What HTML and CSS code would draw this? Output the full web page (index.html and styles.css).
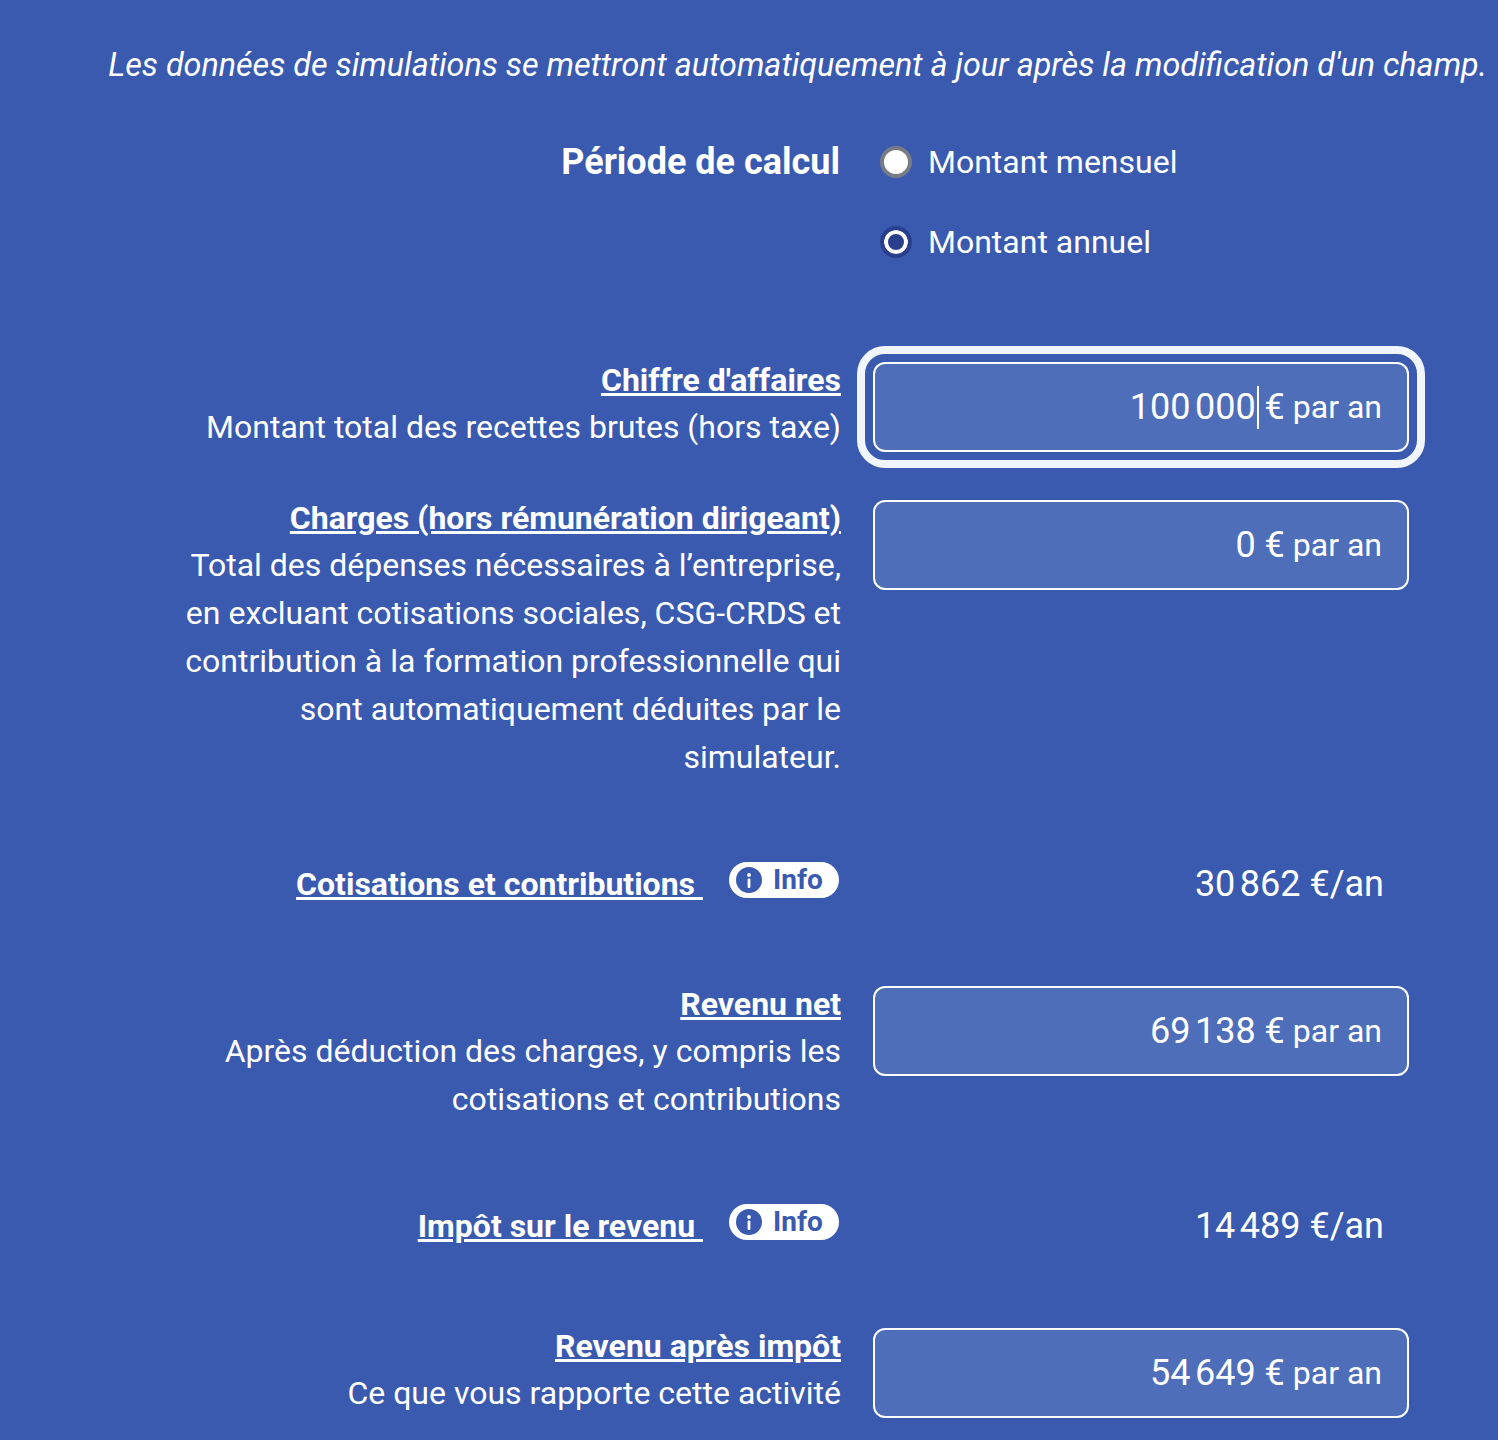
FILE: index.html
```html
<!DOCTYPE html>
<html lang="fr">
<head>
  <meta charset="UTF-8">
  <meta name="viewport" content="width=device-width, initial-scale=1.0">
  <title>Simulateur de revenus</title>
  <link rel="stylesheet" href="styles.css">
</head>
<body>
  <p class="intro">Les données de simulations se mettront automatiquement à jour après la modification d'un champ.</p>

  <div class="row period">
    <div class="period-title">Période de calcul</div>
    <div class="radios">
      <div class="radio-option"><span class="radio"></span>Montant mensuel</div>
      <div class="radio-option"><span class="radio checked"></span>Montant annuel</div>
    </div>
  </div>

  <div class="row">
    <div class="label">
      <a class="label-title" href="#">Chiffre d'affaires</a>
      <div>Montant total des recettes brutes (hors taxe)</div>
    </div>
    <div class="field focused"><span class="amount">100&#8239;000</span><span class="caret"></span><span class="amount">&nbsp;€</span><span>&nbsp;par an</span></div>
  </div>

  <div class="row">
    <div class="label">
      <a class="label-title" href="#">Charges (hors rémunération dirigeant)</a>
      <div>Total des dépenses nécessaires à l’entreprise, en excluant cotisations sociales, CSG-CRDS et contribution à la formation professionnelle qui sont automatiquement déduites par le simulateur.</div>
    </div>
    <div class="field"><span class="amount">0 €</span><span>&nbsp;par an</span></div>
  </div>

  <div class="row result">
    <div class="result-label">
      <a class="label-title" href="#">Cotisations et contributions&nbsp;</a>
      <span class="info"><svg viewBox="0 0 26 26" width="26" height="26"><circle cx="13" cy="13" r="13" fill="#3a5ab0"/><circle cx="13" cy="8" r="1.9" fill="#fff"/><rect x="11.6" y="11.4" width="2.8" height="9.6" rx="1" fill="#fff"/></svg>Info</span>
    </div>
    <div class="result-value">30&#8239;862 €/an</div>
  </div>

  <div class="row">
    <div class="label">
      <a class="label-title" href="#">Revenu net</a>
      <div>Après déduction des charges, y compris les cotisations et contributions</div>
    </div>
    <div class="field"><span class="amount">69&#8239;138 €</span><span>&nbsp;par an</span></div>
  </div>

  <div class="row result">
    <div class="result-label">
      <a class="label-title" href="#">Impôt sur le revenu&nbsp;</a>
      <span class="info"><svg viewBox="0 0 26 26" width="26" height="26"><circle cx="13" cy="13" r="13" fill="#3a5ab0"/><circle cx="13" cy="8" r="1.9" fill="#fff"/><rect x="11.6" y="11.4" width="2.8" height="9.6" rx="1" fill="#fff"/></svg>Info</span>
    </div>
    <div class="result-value">14&#8239;489 €/an</div>
  </div>

  <div class="row">
    <div class="label">
      <a class="label-title" href="#">Revenu après impôt</a>
      <div>Ce que vous rapporte cette activité</div>
    </div>
    <div class="field"><span class="amount">54&#8239;649 €</span><span>&nbsp;par an</span></div>
  </div>
</body>
</html>
```
FILE: styles.css
```css
html, body {
  height: 1440px;
  overflow: hidden;
}

body {
  margin: 0;
  background-color: #3a5ab0;
  color: #fff;
  font-family: Roboto, "Liberation Sans", sans-serif;
  font-size: 32px;
  line-height: 48px;
}

.intro {
  margin: 0 11px 49px 0;
  padding-top: 41px;
  text-align: right;
  font-size: 32.3px;
  font-style: italic;
}

.row {
  display: grid;
  grid-template-columns: 841px 536px;
  column-gap: 32px;
  margin-bottom: 48px;
}

.period {
  margin-bottom: 96px;
}

.period-title {
  text-align: right;
  font-size: 36px;
  font-weight: 700;
  padding-right: 1px;
}

.radios {
  display: flex;
  flex-direction: column;
  gap: 32px;
  margin-left: 7px;
}

.radio-option {
  display: flex;
  align-items: center;
  gap: 16px;
}

.radio {
  box-sizing: border-box;
  width: 32px;
  height: 32px;
  border-radius: 50%;
  background-color: #fff;
  border: 4px solid #777b84;
}

.radio.checked {
  border-color: #2a3f8c;
  background-color: #2a3f8c;
  box-shadow: inset 0 0 0 4px #fff;
}

.label {
  padding-left: 173px;
  text-align: right;
  margin-top: -5px;
}

.label-title {
  color: #fff;
  font-weight: 700;
  text-decoration: underline;
}

.label .label-title {
  display: block;
  line-height: 46px;
}

.field {
  box-sizing: border-box;
  height: 90px;
  display: flex;
  align-items: center;
  justify-content: flex-end;
  padding-right: 25px;
  background-color: #4f6eb9;
  border: 2px solid #fff;
  border-radius: 12px;
}

.field.focused {
  outline: 8px solid #f0f5ff;
  outline-offset: 8px;
}

.amount {
  font-size: 36px;
}

.caret {
  width: 2px;
  height: 43px;
  margin-left: 1px;
  margin-right: -3px;
  background-color: #fff;
}

.result {
  padding: 31px 0 30px;
}

.result-label {
  display: flex;
  justify-content: flex-end;
  align-items: center;
  gap: 26px;
  padding-right: 2px;
}

.info {
  display: flex;
  align-items: center;
  gap: 11px;
  height: 36px;
  width: 110px;
  box-sizing: border-box;
  padding-left: 7px;
  margin-top: -8px;
  background-color: #fff;
  border-radius: 18px;
  color: #3a5ab0;
  font-size: 28px;
  font-weight: 700;
}

.result-value {
  text-align: right;
  font-size: 36px;
  padding-right: 25px;
}
```
